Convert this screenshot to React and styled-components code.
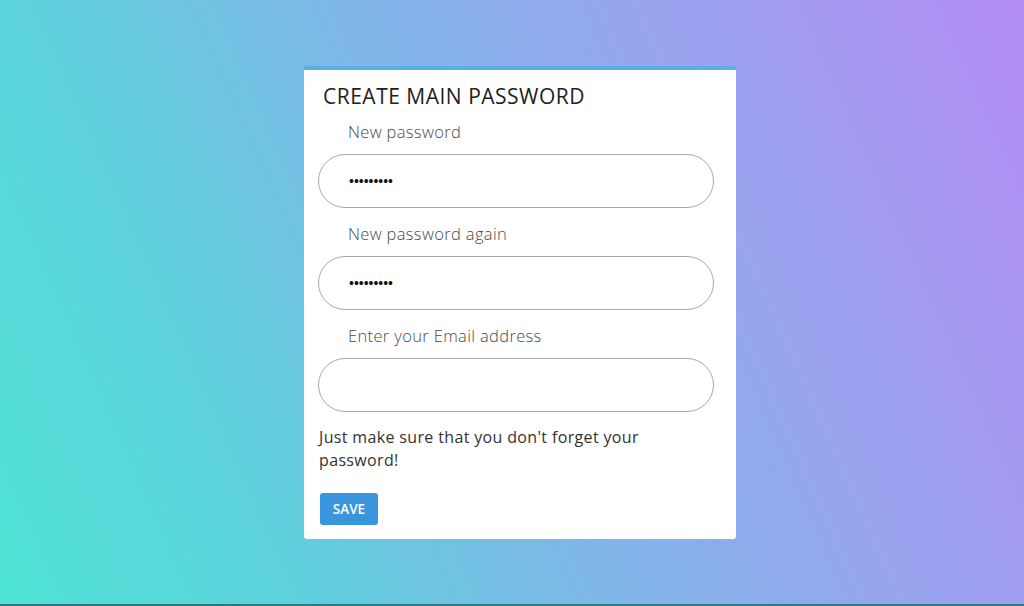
import React from "react";
import styled, { createGlobalStyle } from "styled-components";

const Global = createGlobalStyle`
  html, body {
    margin: 0;
    padding: 0;
    height: 606px;
    overflow: hidden;
  }
  body {
    font-family: "Open Sans", "Liberation Sans", sans-serif;
    background: linear-gradient(66deg, #4fe3d6 0%, #5cd2dc 22%, #7cb8e6 45%, #93a8ee 65%, #a29ef0 80%, #b38cf4 100%);
  }
  * { box-sizing: border-box; }
`;

const Page = styled.div`
  height: 606px;
  padding: 66px 0 0 304px;
  border-bottom: 2px solid #2c7a80;
`;

const Card = styled.form`
  width: 432px;
  height: 473px;
  background: #fff;
  border-top: 4px solid #5bafe3;
  border-radius: 3px;
  padding: 0 22px 14px 14px;
  display: flex;
  flex-direction: column;
`;

const Title = styled.h1`
  margin: 13px 0 0 5px;
  font-size: 21px;
  line-height: 26px;
  font-weight: 400;
  color: #222;
  letter-spacing: 0.5px;
`;

const Field = styled.div`
  display: flex;
  flex-direction: column;
  margin-top: ${(p) => (p.$first ? "13px" : "16px")};
`;

const Label = styled.label`
  padding-left: 30px;
  font-size: 16.5px;
  line-height: 20px;
  font-weight: 300;
  color: #4a4a4a;
  letter-spacing: 0.35px;
  margin-bottom: 12px;
`;

const Input = styled.input`
  width: 396px;
  height: 54px;
  border: 1px solid #a9a9a9;
  border-radius: 27px;
  padding: 0 30px;
  font-family: inherit;
  font-size: 13px;
  font-weight: 700;
  color: #111;
  letter-spacing: 0px;
  background: #fff;
  outline: none;
`;

const Note = styled.p`
  margin: 14px 0 0 1px;
  max-width: 350px;
  font-size: 16px;
  line-height: 23px;
  color: #333;
  letter-spacing: 0.35px;
`;

const SaveButton = styled.button`
  margin: 21px 0 0 2px;
  width: 58px;
  height: 32px;
  border: none;
  border-radius: 3px;
  background: #3a96dc;
  color: #fff;
  font-family: inherit;
  font-size: 13.5px;
  font-weight: 600;
  align-self: flex-start;
  padding: 0;
`;

export default function App() {
  return (
    <>
      <Global />
      <Page>
        <Card onSubmit={(e) => e.preventDefault()}>
          <Title>CREATE MAIN PASSWORD</Title>
          <Field $first>
            <Label>New password</Label>
            <Input type="password" defaultValue="123456789" />
          </Field>
          <Field>
            <Label>New password again</Label>
            <Input type="password" defaultValue="123456789" />
          </Field>
          <Field>
            <Label>Enter your Email address</Label>
            <Input type="email" defaultValue="" />
          </Field>
          <Note>Just make sure that you don't forget your password!</Note>
          <SaveButton type="submit">SAVE</SaveButton>
        </Card>
      </Page>
    </>
  );
}
